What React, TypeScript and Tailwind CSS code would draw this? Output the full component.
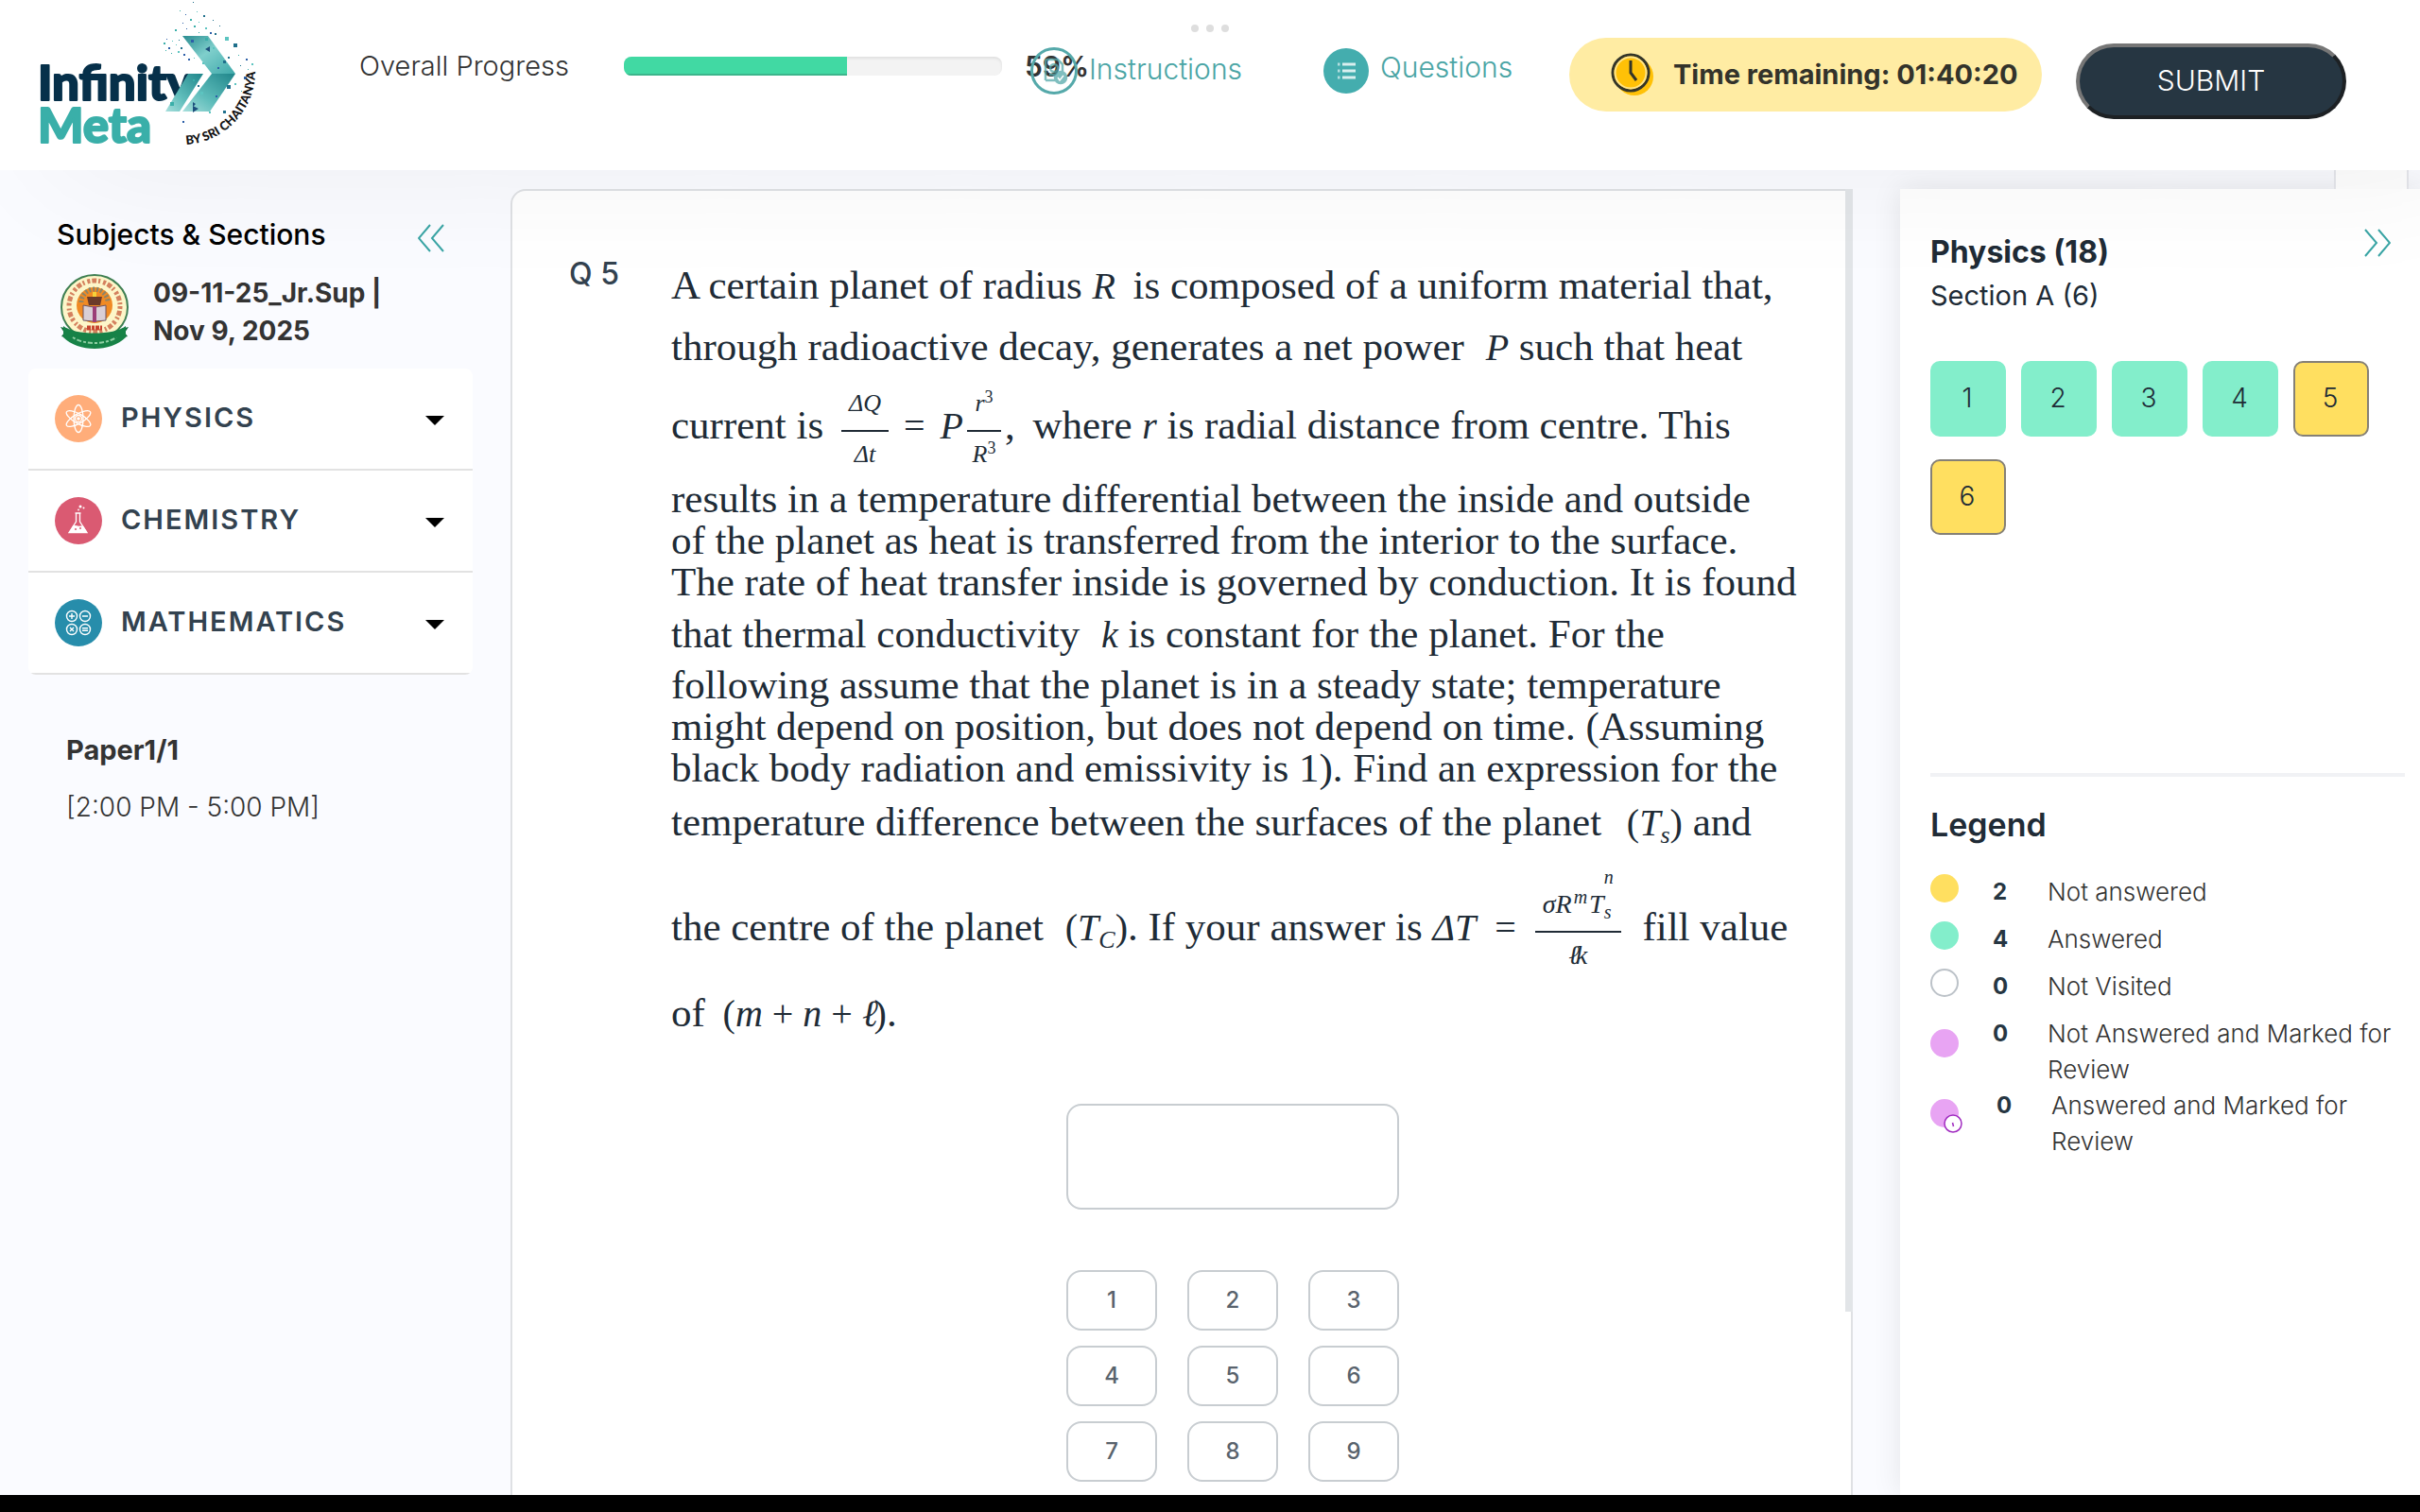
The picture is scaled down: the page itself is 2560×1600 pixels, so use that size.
import type { ReactNode } from "react";

const particles = [
  [204, 2, 1], [190, 11, 1], [196, 15, 1], [208, 12, 1], [215, 16, 2], [201, 20, 2], [193, 24, 1], [210, 23, 1], [225, 21, 1],
  [205, 27, 2], [197, 30, 1], [217, 29, 2], [232, 27, 1], [185, 31, 2], [222, 34, 2], [238, 39, 4], [227, 35, 2], [210, 34, 1],
  [176, 41, 1], [182, 43, 1], [189, 42, 1], [173, 45, 2], [178, 50, 2], [186, 47, 1], [191, 50, 2], [181, 56, 1], [194, 57, 2],
  [188, 54, 2], [247, 46, 4], [175, 53, 1], [199, 62, 2], [205, 61, 1], [241, 60, 2], [252, 58, 1], [260, 62, 2], [266, 67, 2],
  [254, 69, 1], [262, 73, 1], [258, 81, 3], [248, 88, 2], [240, 90, 4], [255, 96, 1], [228, 101, 2], [212, 97, 3], [236, 117, 3],
  [180, 108, 4], [193, 128, 2], [221, 118, 2], [209, 90, 2], [204, 84, 2], [230, 71, 2], [214, 66, 2], [236, 64, 3], [217, 40, 3],
  [202, 42, 3], [225, 50, 2],
];
const particleFills = ["#1f6f8b", "#3aafa9", "#2d5fa8", "#5cc4c0"];

function Logo() {
  return (
    <svg viewBox="0 0 300 180" className="h-[180px] w-[300px] shrink-0" role="img" aria-label="Infinity Meta by Sri Chaitanya">
      <defs>
        <linearGradient id="chevTop" x1="0" y1="0" x2="1" y2="1">
          <stop offset="0" stopColor="#2a8c90" />
          <stop offset="0.45" stopColor="#7fcfcc" />
          <stop offset="1" stopColor="#3fa9aa" />
        </linearGradient>
        <linearGradient id="chevLow" x1="1" y1="0" x2="0" y2="1">
          <stop offset="0" stopColor="#1f858a" />
          <stop offset="0.6" stopColor="#5fbdbb" />
          <stop offset="1" stopColor="#a8dfdc" />
        </linearGradient>
        <path id="byline" d="M197 153 A78 78 0 0 0 270 74" />
      </defs>
      <text x="40" y="106" fontFamily="Lato" fontWeight="900" fontSize="51" fill="#06304a" stroke="#06304a" strokeWidth="2" strokeLinejoin="round">Infinity</text>
      <text x="40" y="151" fontFamily="Lato" fontWeight="900" fontSize="51" fill="#3aafa9" stroke="#3aafa9" strokeWidth="2" strokeLinejoin="round">Meta</text>
      <polygon points="193,38 220,38 249,78 224,78" fill="url(#chevTop)" />
      <polygon points="249,78 224,78 193,118 222,118" fill="url(#chevLow)" />
      <polygon points="199,78 215,78 190,118 175,118" fill="url(#chevLow)" />
      {particles.map(([x, y, s], i) => (
        <rect key={i} x={x} y={y} width={s} height={s} fill={particleFills[i % 4]} />
      ))}
      <path d="M217 52l5-3v6z M204 112l6 3-6 4z M204 108l3 2-3 3z" fill="#1d4f7c" />
      <text fontFamily="Lato" fontWeight="900" fontSize="13" fill="#111">
        <textPath href="#byline">BY SRI CHAITANYA</textPath>
      </text>
    </svg>
  );
}

function Emblem() {
  return (
    <svg viewBox="0 0 72 80" className="h-20 w-[72px] shrink-0" role="img" aria-label="School emblem">
      <path d="M0 56l8 2v10l-7-2 3-4z M72 56l-8 2v10l7-2-3-4z" fill="#12693a" />
      <ellipse cx="36" cy="35" rx="35" ry="34" fill="#fdf6c9" stroke="#3f7f52" strokeWidth="2" />
      <ellipse cx="36" cy="34" rx="27" ry="27" fill="none" stroke="#c65a3a" strokeWidth="5" strokeDasharray="3 2 5 2 2 3" strokeOpacity="0.75" />
      <circle cx="36" cy="33" r="19" fill="#f08a24" />
      <path d="M22 30a14 14 0 0 1 28 0" fill="none" stroke="#8b8468" strokeWidth="5" strokeDasharray="2 2" />
      <path d="M28 24h16l-2 9H30z" fill="#6b3b2a" />
      <rect x="34" y="19" width="4" height="5" fill="#f5d13a" />
      <path d="M24 33l11 2v15l-11-1z M48 33l-11 2v15l11-1z" fill="#d9cfd6" stroke="#6d5560" strokeWidth="1" />
      <rect x="34" y="34" width="4" height="17" fill="#9b3f77" />
      <path d="M3 55c12 10 54 10 66 0v12c-16 16-50 16-66 0z" fill="#178247" />
      <path d="M28 57h16" stroke="#c8442f" strokeWidth="5" strokeDasharray="4 1 3 1" />
      <path d="M13 67c12 8 34 8 46 0" fill="none" stroke="#8fcfa3" strokeWidth="2" strokeDasharray="3 2 5 2" />
    </svg>
  );
}

function PhysicsIcon() {
  return (
    <svg viewBox="0 0 50 50" className="size-[50px] shrink-0" aria-hidden="true">
      <circle cx="25" cy="25" r="25" fill="#ffad7a" />
      <g fill="none" stroke="#fff" strokeWidth="1.3">
        <ellipse cx="25" cy="25" rx="5" ry="14.5" />
        <ellipse cx="25" cy="25" rx="5" ry="14.5" transform="rotate(60 25 25)" />
        <ellipse cx="25" cy="25" rx="5" ry="14.5" transform="rotate(-60 25 25)" />
        <circle cx="25" cy="25" r="3.5" />
      </g>
      <circle cx="25" cy="25" r="1.8" fill="#fff" />
    </svg>
  );
}

function ChemistryIcon() {
  return (
    <svg viewBox="0 0 50 50" className="size-[50px] shrink-0" aria-hidden="true">
      <circle cx="25" cy="25" r="25" fill="#da5a72" />
      <path d="M21.5 17h6M22.5 17v9L15 37.5h19L26.5 26v-9" fill="none" stroke="#fff" strokeWidth="1.3" />
      <path d="M19 30.5c3-1.500 5 1 8 0l3 0 4 6.500H15.500z" fill="#fff" />
      <circle cx="22" cy="34" r="1" fill="#da5a72" />
      <circle cx="27" cy="33" r="1" fill="#da5a72" />
      <g fill="#fff">
        <circle cx="25" cy="13.5" r="0.9" />
        <circle cx="27" cy="10" r="1.5" />
        <circle cx="30.5" cy="11.5" r="1" />
      </g>
    </svg>
  );
}

function MathIcon() {
  return (
    <svg viewBox="0 0 50 50" className="size-[50px] shrink-0" aria-hidden="true">
      <circle cx="25" cy="25" r="25" fill="#278dab" />
      <g fill="none" stroke="#fff" strokeWidth="1.4">
        <circle cx="18" cy="18" r="5.5" />
        <circle cx="32" cy="18" r="5.5" />
        <circle cx="18" cy="32" r="5.5" />
        <circle cx="32" cy="32" r="5.5" />
        <path d="M15 18h6M18 15v6M29 18h6M16 30l4 4M20 30l-4 4M29 30.800h6M29 33.200h6" />
      </g>
    </svg>
  );
}

function Chevrons({ flip = false }: { flip?: boolean }) {
  return (
    <svg viewBox="0 0 28 30" className={flip ? "h-[30px] w-7 rotate-180" : "h-[30px] w-7"} fill="none" stroke="#3aa5a5" strokeWidth="2" aria-hidden="true">
      <path d="M13 1L1 15l12 14M27 1L15 15l12 14" />
    </svg>
  );
}

function InstructionsIcon() {
  return (
    <svg viewBox="0 0 50 50" className="size-[50px] shrink-0" fill="none" stroke="#55a9aa" aria-hidden="true">
      <circle cx="25" cy="25" r="23.5" strokeWidth="3" />
      <g strokeWidth="2.5" opacity="0.75">
        <path d="M16 35V15a2 2 0 0 1 2-2h11l5 5v8M16 35h10M20 29h6" />
        <circle cx="25" cy="22" r="4" />
        <circle cx="32" cy="32" r="6" fill="#55a9aa" />
        <path d="M29 32l2 3 4-5" stroke="#fff" strokeWidth="1.5" />
      </g>
    </svg>
  );
}

function QuestionsIcon() {
  return (
    <svg viewBox="0 0 48 50" className="h-[50px] w-12 shrink-0" aria-hidden="true">
      <circle cx="24" cy="25" r="24" fill="#44adae" />
      <path d="M20 18h14M20 25h14M20 32h14" stroke="#fff" strokeOpacity="0.8" strokeWidth="3" />
      <path d="M15 18h2.500M15 25h2.500M15 32h2.500" stroke="#fff" strokeOpacity="0.6" strokeWidth="3" />
    </svg>
  );
}

function ClockIcon() {
  return (
    <svg viewBox="0 0 46 46" className="size-[46px] shrink-0" aria-hidden="true">
      <circle cx="25" cy="25" r="20" fill="#ffc107" />
      <circle cx="21" cy="21" r="19" fill="#ffc107" stroke="#333529" strokeWidth="3" />
      <circle cx="21" cy="21" r="16.5" fill="none" stroke="#ffe58a" strokeWidth="2" />
      <path d="M21 8v13l6 8" fill="none" stroke="#333529" strokeWidth="3" />
    </svg>
  );
}

const subjects = [
  { name: "PHYSICS", icon: <PhysicsIcon /> },
  { name: "CHEMISTRY", icon: <ChemistryIcon /> },
  { name: "MATHEMATICS", icon: <MathIcon /> },
];

const palette = [
  { n: 1, answered: true },
  { n: 2, answered: true },
  { n: 3, answered: true },
  { n: 4, answered: true },
  { n: 5, answered: false },
  { n: 6, answered: false },
];

const legend = [
  { count: 2, label: "Not answered", dot: "bg-[#ffdf60]", row: "mb-3" },
  { count: 4, label: "Answered", dot: "bg-[#83eecb]", row: "mb-3" },
  { count: 0, label: "Not Visited", dot: "border-2 border-[#bcc2c8] bg-white", row: "mb-3" },
  { count: 0, label: "Not Answered and Marked for Review", dot: "mt-3.5 bg-[#e8a4f3]", row: "" },
];

/* Italic variable inside a formula. */
function M({ children, className = "" }: { children: ReactNode; className?: string }) {
  return <i className={`text-[40px] leading-none ${className}`}>{children}</i>;
}

/* Upright operator or bracket inside a formula. */
function Op({ children, className = "" }: { children: ReactNode; className?: string }) {
  return <span className={`text-[40px] leading-none ${className}`}>{children}</span>;
}

function Sub({ children }: { children: ReactNode }) {
  return <span className="align-[-8px] text-[26px] leading-none italic">{children}</span>;
}

function Question() {
  return (
    <p className="font-['Liberation_Serif',serif] text-[43px] whitespace-nowrap text-[#202b36]">
      <span className="block leading-[66px]">
        A certain planet of radius <M>R</M> <span className="ml-2">is composed of a uniform material that,</span>
      </span>
      <span className="block leading-[64px]">
        through radioactive decay, generates a net power <M className="ml-3">P</M> such that heat
      </span>
      <span className="block h-[102px] leading-[102px]">
        current is{" "}
        <span className="ml-2 inline-flex flex-col items-center align-middle text-[26px] italic">
          <span className="mb-2 leading-10">ΔQ</span>
          <span className="h-0.5 w-[50px] bg-[#202b36]" />
          <span className="mt-1 leading-10">Δt</span>
        </span>
        <Op className="mx-4">=</Op>
        <M>P</M>
        <span className="mx-1 inline-flex flex-col items-center align-middle text-[26px] italic">
          <span className="mb-2 leading-10">
            r<span className="align-[9px] text-[18px] leading-none not-italic">3</span>
          </span>
          <span className="h-0.5 w-9 bg-[#202b36]" />
          <span className="mt-1 leading-10">
            R<span className="align-[9px] text-[18px] leading-none not-italic">3</span>
          </span>
        </span>
        , <span className="ml-2">where</span> <M>r</M> is radial distance from centre. This
      </span>
      <span className="mt-[5px] block leading-[44px]">results in a temperature differential between the inside and outside</span>
      <span className="block leading-[44px]">of the planet as heat is transferred from the interior to the surface.</span>
      <span className="block leading-[44px]">The rate of heat transfer inside is governed by conduction. It is found</span>
      <span className="block leading-[65px]">
        that thermal conductivity <M className="ml-3">k</M> is constant for the planet. For the
      </span>
      <span className="block leading-[44px]">following assume that the planet is in a steady state; temperature</span>
      <span className="block leading-[44px]">might depend on position, but does not depend on time. (Assuming</span>
      <span className="block leading-[44px]">black body radiation and emissivity is 1). Find an expression for the</span>
      <span className="block leading-[70px]">
        temperature difference between the surfaces of the planet <Op className="ml-4">(</Op>
        <M>T</M>
        <Sub>s</Sub>
        <Op>)</Op> and
      </span>
      <span className="block h-[152px] leading-[152px]">
        the centre of the planet <Op className="ml-3">(</Op>
        <M>T</M>
        <Sub>C</Sub>
        <Op>)</Op>. If your answer is <M>ΔT</M>
        <Op className="mx-5">=</Op>
        <span className="inline-flex flex-col items-center align-middle text-[28px] italic">
          <span className="mb-2 flex items-end px-2">
            <span className="leading-10">
              σR<span className="mx-0.5 align-[10px] text-[20px] leading-none">m</span>T
            </span>
            <span className="flex flex-col text-[20px]">
              <span className="mb-[13px] leading-6">n</span>
              <span className="leading-6">s</span>
            </span>
          </span>
          <span className="h-0.5 w-full bg-[#202b36]" />
          <span className="mt-1 pb-6 leading-10">
            <span className="-mr-1">ℓ</span>k
          </span>
        </span>{" "}
        <span className="ml-3">fill value</span>
      </span>
      <span className="-mt-4 block leading-[62px]">
        of <Op className="ml-2">(</Op>
        <M>m</M>
        <Op className="mx-2.5">+</Op>
        <M>n</M>
        <Op className="mx-2.5">+</Op>
        <M className="-mr-1">ℓ</M>
        <Op>)</Op>.
      </span>
    </p>
  );
}

export default function App() {
  return (
    <div className="flex min-h-screen flex-col bg-[#fafbff] font-['Inter',sans-serif] text-[28px] text-[#333]">
      <header className="relative z-10 flex h-[180px] items-start bg-white shadow-[60px_0_150px_rgba(0,0,0,0.06)]">
        <Logo />
        <div className="mt-[50px] ml-20 flex h-10 items-center text-[30px]">
          <span id="progress-label" className="w-[280px] text-[29px] font-light">Overall Progress</span>
          <div
            role="progressbar"
            aria-labelledby="progress-label"
            aria-valuenow={59}
            className="h-5 w-[400px] overflow-hidden rounded-lg bg-[#f3f3f3] shadow-[inset_0_2px_3px_rgba(0,0,0,0.08)]"
          >
            <div className="h-full border-b-2 border-[#3cb58b] bg-[#41d9a3]" style={{ width: "59%" }} />
          </div>
          <span className="w-20 pl-6 font-semibold">59%</span>
        </div>
        <nav className="mt-[50px] -ml-[50px] flex items-center text-[30px] font-light text-[#4aa5a5]">
          <a href="#instructions" className="flex w-[310px] items-center gap-3">
            <InstructionsIcon />
            <span className="-mt-1">Instructions</span>
          </a>
          <a href="#questions" className="flex items-center gap-3">
            <QuestionsIcon />
            <span className="-mt-2">Questions</span>
          </a>
        </nav>
        <div className="mt-10 ml-auto flex h-[78px] w-[500px] shrink-0 items-center gap-5 rounded-full bg-[#ffeca3] pl-11 font-bold whitespace-nowrap text-[#33332b]">
          <ClockIcon />
          <span className="text-[29px]">Time remaining: 01:40:20</span>
        </div>
        <button className="mt-[46px] mr-[78px] ml-9 h-20 w-[286px] shrink-0 rounded-full border-4 border-t-[#767676] border-r-[#1d2124] border-b-[#1d2124] border-l-[#767676] bg-[#263642] pb-0.5 text-[30px] font-light text-white">
          SUBMIT
        </button>
        <div className="absolute top-[26px] left-1/2 flex -translate-x-1/2 gap-2" aria-hidden="true">
          <span className="size-2 rounded-full bg-[#dedede]" />
          <span className="size-2 rounded-full bg-[#dedede]" />
          <span className="size-2 rounded-full bg-[#dedede]" />
        </div>
      </header>

      <div className="flex flex-1">
        <aside className="w-[540px] shrink-0 pt-[46px] pr-10 pl-[30px]">
          <div className="flex items-center justify-between pr-[30px] pl-[30px]">
            <h2 className="text-[30px] leading-[44px] font-medium text-black">Subjects &amp; Sections</h2>
            <button aria-label="Collapse subjects" className="mt-2">
              <Chevrons />
            </button>
          </div>
          <div className="mt-5 flex items-center gap-[26px] pl-[34px]">
            <Emblem />
            <p className="leading-10 font-bold">
              09-11-25_Jr.Sup |<br />
              Nov 9, 2025
            </p>
          </div>
          <ul className="mt-5 overflow-hidden rounded-lg bg-white">
            {subjects.map((s) => (
              <li key={s.name}>
                <button className="flex h-[108px] w-full items-center border-b-2 border-[#e2e2e2] pr-[30px] pl-7 text-left">
                  {s.icon}
                  <span className="-mt-0.5 ml-5 flex-1 text-[29px] font-semibold tracking-[2px] text-[#33424f]">{s.name}</span>
                  <svg viewBox="0 0 20 10" className="mt-1 h-2.5 w-5" aria-hidden="true">
                    <path d="M0 0h20L10 10z" fill="#000" />
                  </svg>
                </button>
              </li>
            ))}
          </ul>
          <div className="mt-[60px] pl-10">
            <p className="text-[29px] leading-10 font-bold">Paper1/1</p>
            <p className="mt-5 leading-10 font-light">[2:00 PM - 5:00 PM]</p>
          </div>
        </aside>

        <main className="relative mt-5 flex min-w-0 flex-1 rounded-tl-2xl rounded-tr border-2 border-b-0 border-[#dfe1e4] bg-white pt-[67px] pl-[60px]">
          <h1 className="w-[108px] shrink-0 text-[32px] leading-[42px] font-medium text-[#33424f]">Q 5</h1>
          <div className="flex w-[1188px] flex-col items-center">
            <div className="w-full">
              <Question />
            </div>
            <input aria-label="Your answer" className="mt-[65px] h-28 w-[352px] rounded-2xl border-2 border-[#c8cdd1] bg-white px-6 text-center" />
            <div className="mt-16 grid w-[352px] grid-cols-3 gap-x-8 gap-y-4">
              {[1, 2, 3, 4, 5, 6, 7, 8, 9].map((n) => (
                <button key={n} className="h-16 rounded-2xl border-2 border-[#c8cdd1] text-[24px] font-medium text-[#59636d]">
                  {n}
                </button>
              ))}
            </div>
          </div>
          <div className="absolute -top-0.5 -right-0.5 h-[1188px] w-2 bg-[#e2e5e8]" aria-hidden="true" />
        </main>

        <aside className="relative mt-5 ml-[50px] w-[550px] shrink-0 bg-white pt-11 pl-8 shadow-[0_0_30px_rgba(0,0,0,0.09)]">
          <div className="absolute -top-5 right-3 h-5 w-[79px] border-x-2 border-[#e4e5ea] bg-[#fdfdfd]" aria-hidden="true" />
          <div className="flex justify-between pr-[31px]">
            <h2 className="text-[32px] leading-[46px] font-bold text-[#202b36]">Physics (18)</h2>
            <button aria-label="Collapse palette" className="-mt-5">
              <Chevrons flip />
            </button>
          </div>
          <h3 className="text-[29px] leading-[46px] text-[#202b36]">Section A (6)</h3>
          <div className="mt-[46px] grid w-[464px] grid-cols-5 gap-x-4 gap-y-6">
            {palette.map((q) => (
              <button
                key={q.n}
                className={
                  q.answered
                    ? "h-20 rounded-[10px] bg-[#83eecb] pr-0.5 pb-0.5 font-light text-[#202b36]"
                    : "h-20 rounded-[10px] border-2 border-[#858076] bg-[#ffdf60] pr-0.5 pb-0.5 font-light text-[#202b36]"
                }
              >
                {q.n}
              </button>
            ))}
          </div>
          <hr className="mt-[252px] mr-4 border-t-4 border-[#f1f2f5]" />
          <h2 className="mt-[27px] mb-7 text-[34px] leading-[48px] font-semibold text-[#202b36]">Legend</h2>
          <ul className="text-[26px] leading-[38px]">
            {legend.map((l) => (
              <li key={l.label} className={`flex ${l.row}`}>
                <span className={`size-[30px] shrink-0 rounded-full ${l.dot}`} />
                <b className="ml-9 w-[58px] shrink-0 text-[24px] text-[#263642]">{l.count}</b>
                <span className="w-[380px] font-light">{l.label}</span>
              </li>
            ))}
            <li className="flex">
              <span className="relative mt-3 size-[30px] shrink-0 rounded-full bg-[#e8a4f3]">
                <svg viewBox="0 0 20 20" className="absolute top-4 left-3.5 size-5" aria-hidden="true">
                  <circle cx="10" cy="10" r="9" fill="#fff" stroke="#a12cc0" strokeWidth="1.5" />
                  <path d="M9.500 9l1 4" stroke="#a12cc0" strokeWidth="1.5" />
                </svg>
              </span>
              <b className="ml-10 w-[58px] shrink-0 text-[24px] text-[#263642]">0</b>
              <span className="w-[330px] font-light">Answered and Marked for Review</span>
            </li>
          </ul>
        </aside>
      </div>
      <footer className="h-[18px] bg-black" />
    </div>
  );
}
